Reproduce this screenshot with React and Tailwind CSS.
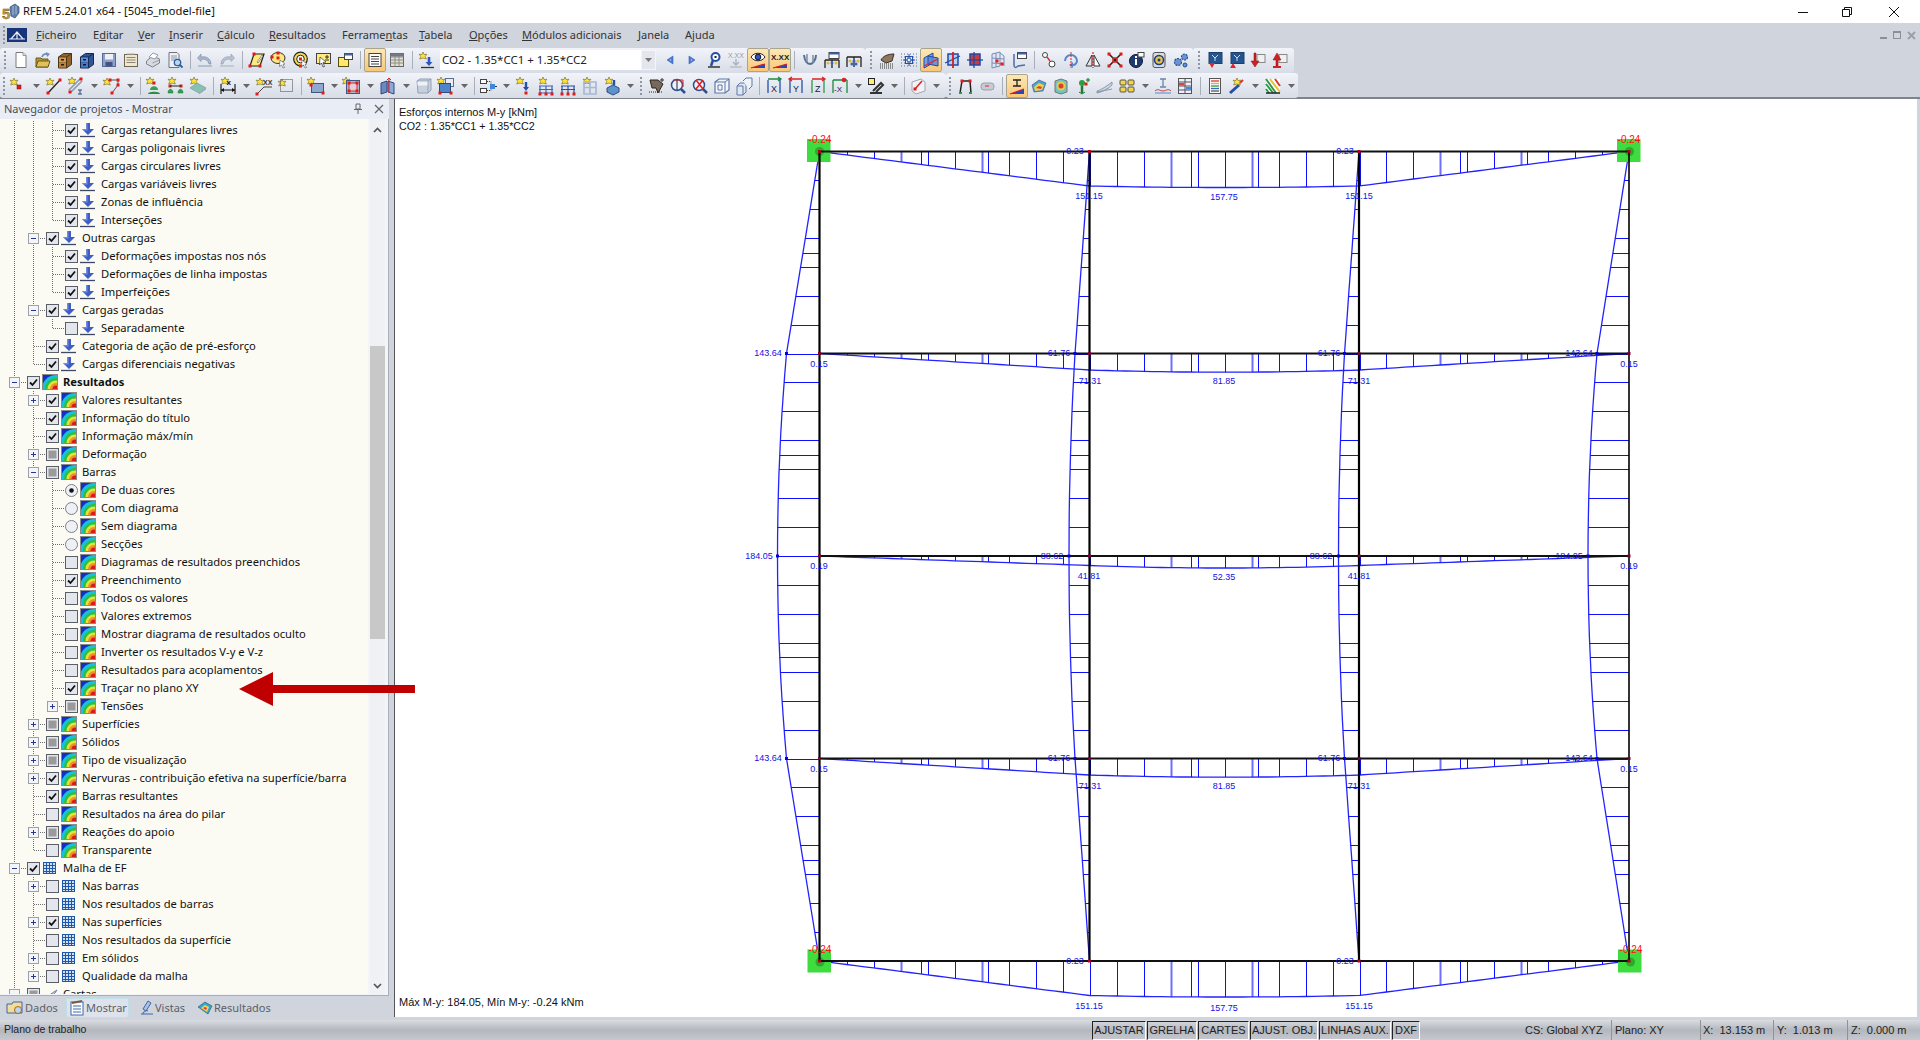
import React from 'react';

const star = (x, y) => <path d={`M${x} ${y - 4}l1.100 2.600 2.800-.4-1.700 2.200 1.100 2.600-3.300-1-3.300 1 1.100-2.600-1.700-2.200 2.800.4z`} fill="#ffe53b" stroke="#6d5f14" strokeWidth=".6" />;
const pt = (x, y, c = '#e21a1a') => <rect x={x - 1.5} y={y - 1.5} width="3" height="3" fill={c} />;
const IC = {
  new: <g><path d="M4 1.500h7l3 3v12H4z" fill="#fff" stroke="#7a7a7a" /><path d="M11 1.500v3h3" fill="#e6e6e6" stroke="#9a9a9a" /></g>,
  open: <g><path d="M2 7h5l1 1h6v8H2z" fill="#b8962e" stroke="#6d5818" /><path d="M4 10h12l-2 6H2z" fill="#dfc25a" stroke="#6d5818" /><path d="M8 6c1-3 4-4 6-2" stroke="#6b8fb8" strokeWidth="1.800" fill="none" /><path d="M12 1l4 2-3 3z" fill="#6b8fb8" /></g>,
  cabA: <g><path d="M2.500 6l5-3.500h8v11l-5 3.500h-8z" fill="#8f6430" stroke="#4c3414" /><path d="M2.500 6h8v11M10.500 6l5-3.500" fill="none" stroke="#4c3414" /><path d="M3 6.500h7v4.500H3z" fill="#cf9b55" /><path d="M3 11.500h7v5H3z" fill="#b98340" /><rect x="5" y="8" width="3" height="1.500" fill="#2b1c08" /><rect x="5" y="13" width="3" height="1.500" fill="#2b1c08" /></g>,
  cabB: <g><path d="M2.500 6l5-3.500h8v11l-5 3.500h-8z" fill="#2f5596" stroke="#16294f" /><path d="M2.500 6h8v11M10.500 6l5-3.500" fill="none" stroke="#16294f" /><path d="M3 6.500h7v4.500H3z" fill="#5f8fd6" /><path d="M3 11.500h7v5H3z" fill="#4a78c2" /><rect x="5" y="8" width="3" height="1.500" fill="#0b1838" /><rect x="5" y="13" width="3" height="1.500" fill="#0b1838" /></g>,
  save: <g><rect x="2.500" y="2.500" width="13" height="13" fill="#8fa0c8" stroke="#5a6a98" /><rect x="5" y="3" width="8" height="5.500" fill="#eef0f6" /><rect x="5.500" y="11" width="7" height="4.500" fill="#45547e" /></g>,
  note: <g><rect x="2.500" y="3.500" width="13" height="12" fill="#efe7cf" stroke="#6d6552" /><path d="M4.500 6.500h9M4.500 9h9M4.500 11.500h9" stroke="#8d8572" /><path d="M5 2.500h8v1H5z" fill="#bbb39a" /></g>,
  print: <g><path d="M2.500 10l6-5 7 3v4l-7 4-6-3z" fill="#d6d9e0" stroke="#7d818a" /><path d="M5 6l4-4 5 2-3 4z" fill="#fff" stroke="#9a9da5" /><path d="M8.500 12l7-3" stroke="#9a9da5" /></g>,
  prev: <g><path d="M3 1.500h8l2 2v13H3z" fill="#eef0f6" stroke="#6d7280" /><path d="M5 5h6M5 7h6M5 9h4" stroke="#8f94a3" /><circle cx="11.500" cy="11.500" r="3.200" fill="#bcd6f2" stroke="#2c5f9e" strokeWidth="1.300" /><path d="M13.500 13.500l3 3" stroke="#2c5f9e" strokeWidth="1.800" /></g>,
  undo: <g><path d="M5 3L1.500 7 5 10.500V8.500c4-1 7 .5 8 4.500h2c-.5-6-5-8-10-7z" fill="#a8b8d0" stroke="#77889f" strokeWidth=".6" /><path d="M2 15h14" stroke="#a8b5c8" strokeWidth="1.600" /></g>,
  redo: <g><path d="M13 3l3.500 4-3.500 3.500V8.500c-4-1-7 .5-8 4.500H3c.5-6 5-8 10-7z" fill="#b8c3d3" stroke="#8c9aae" strokeWidth=".6" /><path d="M2 15h14" stroke="#bac4d3" strokeWidth="1.600" /></g>,
  para: <g><path d="M6 3h10l-4 12H2z" fill="#ffe97e" stroke="#222" strokeWidth="1.200" /><path d="M9 11l5-7 1 1-5 7z" fill="#fff" stroke="#555" strokeWidth=".6" />{pt(6, 3)}{pt(2, 15)}{pt(12, 15)}</g>,
  lens: <g><ellipse cx="8" cy="7" rx="7" ry="5.500" fill="#ffe97e" stroke="#333" />{pt(2, 6)}{pt(8, 2)}{pt(8, 7)}<path d="M10 9l5 4-2 .5 1.500 3-1.500.5-1.500-3-2 1.500z" fill="#fff" stroke="#555" strokeWidth=".6" /></g>,
  ring: <g><circle cx="8.500" cy="8" r="6.800" fill="#f3d94e" stroke="#222" strokeWidth="1.200" /><circle cx="8.500" cy="8" r="3.800" fill="#fff" stroke="#222" />{pt(8.5, 8)}{pt(8.5, 15)}<path d="M10 9l5 4-2 .5 1.500 3-1.500.5-1.500-3-2 1.500z" fill="#fff" stroke="#555" strokeWidth=".6" /></g>,
  pm: <g><rect x="2.500" y="2.500" width="14" height="10" fill="#ffec7e" stroke="#444" /><path d="M6 6l6 5-3 .5 1.500 4-1.500.5-1.500-4-2 2z" fill="#fff" stroke="#333" strokeWidth=".7" /><path d="M11 6h4M13 4v4M11 9h4" stroke="#333" /></g>,
  win: <g><rect x="2.500" y="6.500" width="10" height="9" fill="#ffe86a" stroke="#554c14" /><rect x="8.500" y="2.500" width="8" height="6" fill="#fff" stroke="#444" /><path d="M8.500 3.500h8" stroke="#44649f" strokeWidth="2" /></g>,
  tab: <g><rect x="3" y="2.500" width="12" height="13" fill="#fff" stroke="#444" /><path d="M5 5.500h8M5 8h8M5 10.500h8M5 13h8" stroke="#444" /></g>,
  grid: <g><rect x="2.500" y="2.500" width="13" height="13" fill="#e3e1d5" stroke="#666" /><path d="M2.500 6h13M2.500 9h13M2.500 12h13M7 2.500v13M11 2.500v13" stroke="#8d8d86" /><path d="M2.500 4h13" stroke="#778" strokeWidth="3" /></g>,
  lc: <g>{star(5, 5)}<path d="M11 6v6" stroke="#2f55c0" strokeWidth="2.600" /><path d="M7.500 11l3.500 4 3.500-4z" fill="#2f55c0" /><path d="M3 16.500h13" stroke="#333" strokeWidth="1.300" /></g>,
  tl: <path d="M12 5v8L6 9zM10.500 7.500L8 9l2.500 1.500z" fillRule="evenodd" fill="#4a78d8" stroke="#3564be" strokeWidth=".6" />,
  tr: <path d="M6 5v8l6-4zM7.500 7.500L10 9l-2.500 1.500z" fillRule="evenodd" fill="#4a78d8" stroke="#3564be" strokeWidth=".6" />,
  per: <g><circle cx="10.500" cy="6" r="4" fill="#fff" stroke="#2650a8" strokeWidth="2" /><path d="M8 9l-2 6" stroke="#2650a8" strokeWidth="2.500" /><path d="M3 16h12" stroke="#333" strokeWidth="1.500" /><rect x="9.500" y="5" width="2" height="2" fill="#222" /></g>,
  xxg: <g><text x="1" y="7" fontSize="7" fill="#999" fontFamily="Liberation Sans">X.XX</text><path d="M9 8v6M6 11l3 3 3-3" stroke="#a9b3c4" fill="none" strokeWidth="1.400" /><path d="M3 16h12" stroke="#aaa" /></g>,
  eye: <g><path d="M2 6c3-5 11-5 14 0-3 5-11 5-14 0z" fill="#fff" stroke="#223" /><circle cx="9" cy="6" r="2.800" fill="#2f55c0" stroke="#112" /><path d="M2 17l14-4v4z" fill="#2148c6" /><path d="M2 17l14-4" stroke="#d81f1f" strokeWidth="1.300" /></g>,
  xx: <g><text x="0" y="9" fontSize="8" fontWeight="700" fill="#222" fontFamily="Liberation Sans">X.XX</text><path d="M2 17l14-4v4z" fill="#2148c6" /><path d="M2 17l14-4" stroke="#d81f1f" strokeWidth="1.300" /></g>,
  crv: <g><path d="M3 4c1 8 4 9 6 9s6-3 6-9" fill="none" stroke="#55708f" strokeWidth="2" /><path d="M6 3v8M12 4v8" stroke="#7a90aa" strokeWidth="1.500" /></g>,
  fr1: <g><rect x="6" y="1.500" width="10" height="6" fill="#fff" stroke="#444" /><path d="M6 2.500h10" stroke="#3a5fb0" strokeWidth="2" /><path d="M2 9h14" stroke="#222" strokeWidth="1.500" /><path d="M2 9v8M9 9v8M16 9v8" stroke="#222" strokeWidth="1.300" /><circle cx="5" cy="12" r="1.500" fill="#e0b93a" /><circle cx="9" cy="12" r="1.500" fill="#3a68c0" /><circle cx="13" cy="12" r="1.500" fill="#e0b93a" /></g>,
  fr2: <g><path d="M2 6h14" stroke="#222" strokeWidth="1.500" /><path d="M2 6v10M9 6v10M16 6v10" stroke="#222" strokeWidth="1.300" /><circle cx="5" cy="10" r="1.600" fill="#e0b93a" /><circle cx="9" cy="10" r="1.600" fill="#3a68c0" /><circle cx="13" cy="10" r="1.600" fill="#e0b93a" /><circle cx="7" cy="13" r="1.600" fill="#3a68c0" /><circle cx="11" cy="13" r="1.600" fill="#3a68c0" /></g>,
  hand: <g><path d="M3 9c2-4 7-6 13-6l-2 7-6 2z" fill="#8f775f" stroke="#3d3025" /><path d="M2 13h14M2 15h14M2 17h14" stroke="#333" strokeDasharray="1 1" /></g>,
  tgt: <g><path d="M1 3h16M1 6h16M1 9h16M1 12h16M1 15h16" stroke="#5c6f96" strokeDasharray="1 2" /><rect x="5.500" y="5.500" width="7" height="7" fill="none" stroke="#2650a8" /><path d="M3 9h12M9 3v12" stroke="#2650a8" /><circle cx="9" cy="9" r="2" fill="#dff" stroke="#2650a8" /></g>,
  pl1: <g><path d="M2 7l9-5v10l-9 5z" fill="#7aa0e0" stroke="#1e4aa8" /><path d="M6 5l10 2v8L6 13z" fill="#5a84d4" stroke="#1e4aa8" fillOpacity=".8" /><path d="M2 15l14-7" stroke="#e22" strokeWidth="1.200" /></g>,
  pl2: <g><path d="M4 3h10v11H4z" fill="#b9cdf0" stroke="#1e4aa8" strokeWidth="1.500" /><path d="M1 12L16 5" stroke="#1e4aa8" strokeWidth="1.300" /><path d="M9 1v16" stroke="#d61e1e" strokeWidth="1.800" /></g>,
  pl3: <g><path d="M4 3h10v11H4z" fill="#d23a3a" stroke="#1e4aa8" strokeWidth="1.500" /><path d="M1 9h16" stroke="#1e4aa8" strokeWidth="1.300" /><path d="M8 1v16" stroke="#1e4aa8" strokeWidth="1.300" /></g>,
  gr3: <g><path d="M4 3l8-2v14l-8 2z" fill="#dfe6f4" stroke="#7a8db3" /><path d="M4 7l12 1M4 12l12 1M8 2v14M12 2l4 3v10" stroke="#7a8db3" fill="none" />{pt(9, 10)}{pt(14, 13)}</g>,
  brk: <g><path d="M4 3v11c0 3 2 3 4 1l7-1" stroke="#4a6ea8" strokeWidth="1.500" fill="none" /><rect x="7.500" y="1.500" width="9" height="6" fill="#fff" stroke="#444" /><path d="M7.500 2.500h9" stroke="#3a5fb0" strokeWidth="2" /></g>,
  chn: <g><circle cx="5" cy="4" r="2.500" fill="#fff" stroke="#444" /><circle cx="12" cy="13" r="3" fill="#fff" stroke="#444" /><path d="M7 6l3 4" stroke="#d22" strokeWidth="1.300" /></g>,
  rot: <g><path d="M3 10a6 6 0 1 1 12 0c0 2-2 4-4 4" fill="none" stroke="#5b83c7" strokeWidth="2" /><path d="M7 14l4-3v6z" fill="#5b83c7" /><path d="M9 1v16" stroke="#d22" strokeDasharray="2 1" /></g>,
  mir: <g><path d="M8 4v11H2z" fill="#dfe2e8" stroke="#333" /><path d="M10 4v11h6z" fill="#fff" stroke="#333" /><path d="M9 1v16" stroke="#d22" strokeDasharray="2 1" strokeWidth="1.200" /></g>,
  xr: <g><path d="M3 3l12 12M15 3L3 15" stroke="#1e1e1e" strokeWidth="1.500" />{pt(3, 3)}{pt(15, 3)}{pt(3, 15)}{pt(15, 15)}<rect x="7" y="7" width="4" height="4" fill="none" stroke="#d22" strokeWidth="1.500" /></g>,
  inf: <g><circle cx="8" cy="10" r="6.500" fill="#1f3a6e" stroke="#0c1a38" /><rect x="7" y="8" width="2" height="6" fill="#fff" /><rect x="7" y="5" width="2" height="2" fill="#fff" /><rect x="10" y="1.500" width="6" height="4.500" fill="#fff" stroke="#444" /></g>,
  gp: <g><rect x="3" y="1.500" width="12" height="15" rx="2" fill="#d7dbe3" stroke="#555" /><circle cx="9" cy="9" r="4.500" fill="#e8c34c" stroke="#1e3c80" strokeWidth="1.500" /><circle cx="9" cy="9" r="1.500" fill="#1e3c80" /></g>,
  gr: <g><circle cx="6" cy="11" r="3.500" fill="#6a94cf" stroke="#234f93" strokeWidth="1.200" strokeDasharray="2 1" /><circle cx="12.500" cy="6" r="3" fill="#6a94cf" stroke="#234f93" strokeWidth="1.200" strokeDasharray="2 1" /><circle cx="13" cy="14" r="2" fill="#6a94cf" stroke="#234f93" /></g>,
  sh1: <g><rect x="3" y="1.500" width="13" height="11" fill="#25558f" stroke="#1c3f6e" /><path d="M6 4l3 3 3-3M9 7v3" stroke="#cfe0f5" fill="none" /><path d="M3 12l3 5 3-5z" fill="#e12626" /></g>,
  sh2: <g><rect x="3" y="1.500" width="13" height="11" fill="#25558f" stroke="#1c3f6e" /><path d="M6 4l3 3 3-3M9 7v3" stroke="#cfe0f5" fill="none" /><path d="M2 17l3-5 3 5z" fill="#e12626" /></g>,
  wr1: <g><rect x="7" y="3.500" width="8" height="8" fill="#f0f0f0" stroke="#888" /><path d="M6 2v8h3l-4 6-4-6h3V2z" fill="#d42020" stroke="#8e1212" strokeWidth=".5" /></g>,
  wr2: <g><rect x="7" y="3.500" width="8" height="8" fill="#f0f0f0" stroke="#888" /><path d="M5 2l4 7H6v6H4V9H1z" fill="#d42020" stroke="#8e1212" strokeWidth=".5" /><path d="M1 15h8v2H1z" fill="#d42020" /></g>,
  nd: <g>{star(5, 5)}<rect x="8" y="8" width="4" height="4" fill="#d61c1c" stroke="#7a1010" strokeWidth=".5" /></g>,
  ln: <g>{star(5, 5)}<path d="M3 16L15 3" stroke="#222" strokeWidth="1.300" />{pt(3, 16)}{pt(15, 3)}</g>,
  mb: <g>{star(5, 4)}<path d="M2 13L13 2M4 15L15 4" stroke="#8d9ab0" strokeWidth="1.700" />{pt(14, 2)}{pt(3, 15)}<path d="M11 13h4M11 17h4M13 13v4" stroke="#2f4a80" /></g>,
  pg: <g>{star(4, 5)}<path d="M7 3h8v5l-6 8" stroke="#555" fill="none" />{pt(7, 3)}{pt(15, 3)}{pt(15, 8)}{pt(9, 16)}</g>,
  sp1: <g>{star(5, 4)}{pt(9, 6)}<path d="M5 13c0-5 8-5 8 0z" fill="#31a34a" /><path d="M3 17c0-3 12-3 12 0z" fill="#2a8f40" /></g>,
  sp2: <g>{star(5, 4)}{pt(3, 9)}{pt(14, 9)}<path d="M3 9h11" stroke="#222" /><path d="M1 16c0-5 5-5 5 0zM11 16c0-5 5-5 5 0z" fill="#31a34a" stroke="#1a6c2d" strokeWidth=".5" /></g>,
  pt: <g>{star(5, 4)}<path d="M1 11l7-5 9 5-7 5z" fill="#86c2b0" stroke="#8aa" /><path d="M10 16l7-5v1.500l-7 5z" fill="#9ab" /></g>,
  dim: <g>{star(6, 4)}<path d="M2 7v10M16 7v10M2 13h14" stroke="#111" strokeWidth="1.100" /><text x="7.500" y="8" fontSize="8" fontWeight="700" fontFamily="Liberation Sans" fill="#111">x</text><path d="M2 13l3-2v4zM16 13l-3-2v4z" fill="#111" /></g>,
  txt: <g>{star(5, 5)}<path d="M2 17l7-7h8" stroke="#444" fill="none" />{pt(2, 17)}<text x="8" y="8" fontSize="7" fontWeight="700" fontFamily="Liberation Sans" fill="#333">XX</text></g>,
  ds: <g>{star(5, 6)}<rect x="3.500" y="2.500" width="12" height="12" fill="none" stroke="#444" strokeDasharray="1 1" /></g>,
  sf: <g>{star(4, 4)}<rect x="4.500" y="6.500" width="12" height="9" fill="#8ea8d0" stroke="#40567e" />{pt(16, 16)}{pt(4, 8)}</g>,
  sq: <g>{star(3, 4)}<rect x="3.500" y="3.500" width="13" height="13" fill="#aeb8cc" stroke="#40567e" /><rect x="6" y="6" width="8" height="8" fill="#e8cdd3" stroke="#c83040" />{pt(6, 6)}{pt(14, 6)}{pt(6, 14)}{pt(14, 14)}</g>,
  dl: <g><path d="M2 6l6-2v11l-6 2z" fill="#6b8ac0" stroke="#2d4a80" /><path d="M9 4l6 2v11l-6-2z" fill="#8fa9d4" stroke="#2d4a80" /><path d="M10 2v14" stroke="#d22" /><path d="M8 3l2-2 2 2" stroke="#d22" fill="none" /></g>,
  vol: <g><path d="M2 4l3-2h11v11l-3 3H3z" fill="#c8d0dc" stroke="#93a0b5" /><path d="M2 4h11v12M13 4l3-2" stroke="#93a0b5" fill="none" /><path d="M2.500 4.500h10v4h-10z" fill="#eef1f6" /></g>,
  sl: <g>{star(4, 4)}<rect x="8.500" y="1.500" width="8" height="8" fill="#e8edf5" stroke="#5a708f" /><rect x="2.500" y="6.500" width="11" height="9" fill="#4f85c8" stroke="#2f4a80" />{pt(3, 16)}{pt(14, 16)}</g>,
  dsh: <g><rect x="1.500" y="2.500" width="6" height="4" fill="#fff" stroke="#444" /><rect x="1.500" y="11.500" width="6" height="4" fill="#fff" stroke="#444" /><path d="M8 4.500h4v9H8" stroke="#444" strokeDasharray="1 1" fill="none" /><rect x="11" y="7" width="5" height="5" fill="#3f86dc" /><path d="M16 9.500h2" stroke="#333" /></g>,
  ly: <g>{star(5, 4)}<path d="M11 5v7" stroke="#2650a8" strokeWidth="2.400" /><path d="M8 10l3 4 3-4z" fill="#2650a8" />{pt(11, 16)}</g>,
  fr4: <g>{star(6, 4)}<path d="M2 9h14M3 9v8M9 9v8M15 9v8M2 16h14M2 12.500h14" stroke="#3f64b4" strokeWidth="1.200" />{pt(3, 17)}{pt(9, 17)}{pt(15, 17)}</g>,
  fr5: <g>{star(6, 4)}<path d="M2 9h14M3 9v8M9 9v8M15 9v8M2 12.500h14" stroke="#2650a8" strokeWidth="1.200" />{pt(3, 17)}{pt(9, 17)}{pt(15, 17)}</g>,
  fr6: <g>{star(6, 4)}<path d="M3 5h12v12H3zM3 10.500h12M9 5v12" stroke="#a9b8d4" strokeWidth="1.700" fill="none" /></g>,
  bolt: <g>{star(6, 4)}<path d="M11 3v5" stroke="#2650a8" strokeWidth="2.400" /><path d="M4 11l6-3 6 3v4l-6 3-6-3z" fill="#5f93c9" stroke="#2f4a80" /></g>,
  hm: <g><path d="M3 3h8l5 4 -5 9-2-5H5z" fill="#77695a" stroke="#2a241d" /><path d="M2 15h14" stroke="#222" strokeDasharray="1 1" /><path d="M13 3h4M15 1v4" stroke="#333" /></g>,
  zm: <g><circle cx="8" cy="8" r="5.500" fill="#eef3fb" stroke="#2f4f8f" strokeWidth="1.500" /><path d="M4 3h10v7" stroke="#d22" fill="none" /><path d="M8 3v10" stroke="#222" /><path d="M12 12l4 4" stroke="#2f4f8f" strokeWidth="2.500" /></g>,
  zx: <g><circle cx="8" cy="8" r="5.500" fill="#eef3fb" stroke="#2f4f8f" strokeWidth="1.500" /><path d="M5 3l7 9M12 3l-7 9" stroke="#d22" strokeWidth="1.500" /><path d="M12 12l4 4" stroke="#2f4f8f" strokeWidth="2.500" /></g>,
  cube: <g><path d="M2 5l4-3h10v11l-4 3H2z" fill="#f3f5fb" stroke="#5f78a8" strokeWidth="1.200" /><path d="M2 5h10v11M12 5l4-3M5 8h4v5H5z" stroke="#5f78a8" fill="none" /></g>,
  cub2: <g><path d="M2 9l3-3h6v9l-3 3H2z" fill="#dfe6f2" stroke="#5f78a8" /><path d="M8 4l3-3h6v8l-3 3" fill="#eef2f9" stroke="#5f78a8" /><path d="M2 9h6v9" stroke="#5f78a8" fill="none" /></g>,
  axx: <g><path d="M3 16V3M15 16V3" stroke="#2650a8" strokeWidth="1.300" /><path d="M3 2h12M13 0l3 2-3 2" stroke="#1c8c3c" fill="none" strokeWidth="1.300" /><text x="6" y="15" fontSize="9" fill="#223" fontFamily="Liberation Sans">X</text></g>,
  axy: <g><path d="M3 16V3M15 16V3" stroke="#2650a8" strokeWidth="1.300" /><path d="M3 2h12M5 0L2 2l3 2" stroke="#d22" fill="none" strokeWidth="1.300" /><text x="6" y="15" fontSize="9" fill="#223" fontFamily="Liberation Sans">Y</text></g>,
  axz: <g><path d="M3 16V3M15 16V3" stroke="#2a9a4a" strokeWidth="1.300" /><path d="M3 2h12M13 0l3 2-3 2" stroke="#d22" fill="none" strokeWidth="1.300" /><text x="6" y="15" fontSize="9" fill="#223" fontFamily="Liberation Sans">Z</text></g>,
  axn: <g><path d="M2 16V3M16 16V3M2 3h14" stroke="#1c8c3c" strokeWidth="1.300" /><circle cx="13" cy="3" r="2.300" fill="#d22" /><text x="3" y="15" fontSize="8" fill="#223" fontFamily="Liberation Sans">-X</text></g>,
  mic: <g><rect x="1.500" y="1.500" width="6" height="6" fill="#ffef70" stroke="#222" /><path d="M6 14l8-8 2 2-7 7M3 16h12" stroke="#333" strokeWidth="2" fill="none" /></g>,
  box: <g><path d="M3 5l9-3 4 3v9l-9 3-4-3z" fill="#f1f2f6" stroke="#a2a6ad" /><path d="M6 12l7-8" stroke="#d22" strokeWidth="1.500" />{pt(6, 12)}</g>,
  pi: <g><path d="M4 16L6 4h8l1 12" stroke="#222" strokeWidth="1.500" fill="none" />{pt(6, 4)}{pt(14, 4)}<path d="M3 16h3M13 16h3" stroke="#2a9a4a" strokeWidth="2" /></g>,
  tag: <g><rect x="3" y="6" width="13" height="7" rx="3" fill="#c6ccd6" stroke="#9aa0ad" /><rect x="7" y="8" width="4" height="2" fill="#d77" /></g>,
  act: <g><path d="M9 3v6M5 3h8M5 9h8" stroke="#222" strokeWidth="1.300" /><path d="M2 17l14-5v5z" fill="#2148c6" /><path d="M2 17l14-5" stroke="#d81f1f" strokeWidth="1.300" /></g>,
  sm: <g><path d="M2 8l7-5 7 3-3 8-9 1z" fill="#49a6c8" stroke="#337" strokeWidth=".5" /><path d="M4 10l5-4 5 2-2 5-7 1z" fill="#f0d04a" /><path d="M6 11l3-2 3 1-1 2z" fill="#e04030" /></g>,
  cb: <g><path d="M3 4l6-2 6 2v11l-6 2-6-2z" fill="#6ec6c4" stroke="#777" /><circle cx="9" cy="9" r="4.500" fill="#e6c94c" /><circle cx="9" cy="9" r="2.500" fill="#d94030" /></g>,
  gs: <g><circle cx="8" cy="6" r="3" fill="#2d9c47" /><path d="M8 9v7" stroke="#1c7a33" strokeWidth="2.500" /><path d="M5 15l3 2 3-2" stroke="#1c7a33" fill="none" /><path d="M12 3h4M14 1v4" stroke="#2d9c47" strokeWidth="1.500" />{pt(12, 7)}</g>,
  ps: <g><path d="M1 14c4-1 10-5 15-9v3c-4 4-10 7-15 8z" fill="#cfd5de" stroke="#89a" /><path d="M1 15l15-3" stroke="#89a" /></g>,
  qs: <g><rect x="2" y="3" width="6" height="5" rx="1" fill="#f2d54a" stroke="#554" /><rect x="10" y="3" width="6" height="5" rx="1" fill="#f2d54a" stroke="#554" /><rect x="2" y="10" width="6" height="5" rx="1" fill="#f2d54a" stroke="#554" /><rect x="10" y="10" width="6" height="5" rx="1" fill="#f2d54a" stroke="#554" /></g>,
  is: <g><path d="M6 2h6M6 10h6M9 2v8" stroke="#68a" strokeWidth="1.300" /><path d="M1 14c3-3 5 0 8 0s5-3 8 0" stroke="#c44" fill="none" /><path d="M1 16h16" stroke="#58c" /></g>,
  cl: <g><rect x="2.500" y="1.500" width="13" height="15" fill="#eef" stroke="#555" /><path d="M9 1.500v15M2.500 5h13M2.500 9h13M2.500 13h13" stroke="#555" /><rect x="3" y="6" width="5.500" height="2.500" fill="#d44" /><rect x="10" y="10" width="5" height="2.500" fill="#48d" /></g>,
  ct: <g><rect x="3.500" y="1.500" width="11" height="15" fill="#f8f8f8" stroke="#555" /><path d="M5 4h8" stroke="#d33" strokeWidth="1.300" /><path d="M5 6.500h8" stroke="#e8b030" strokeWidth="1.300" /><path d="M5 9h8" stroke="#2a9a4a" strokeWidth="1.300" /><path d="M5 11.500h8" stroke="#3a68c0" strokeWidth="1.300" /><path d="M5 14h8" stroke="#555" strokeWidth="1.300" /></g>,
  wand: <g><path d="M2 16L11 8" stroke="#2650a8" strokeWidth="3" /><path d="M12 6l3-3" stroke="#d33" strokeWidth="2" />{star(9, 5)}</g>,
  mix: <g><rect x="2" y="2" width="14" height="14" fill="#fff" /><path d="M2 2l10 14M2 7l7 9M2 12l3 4" stroke="#2a9a4a" strokeWidth="2" /><path d="M6 2l10 13" stroke="#e8c030" strokeWidth="2" /><path d="M11 2l5 7" stroke="#d33" strokeWidth="2" /><path d="M2 16h14" stroke="#222" strokeWidth="1.500" /></g>,
};

const Icon = ({ n }) => <svg width="18" height="18" viewBox="0 0 18 18" className="block overflow-visible">{IC[n]}</svg>;

const Grip = ({ w = 'w-[10px]' }) => (
  <div className={`${w} h-full flex flex-col items-center justify-center gap-[2px] shrink-0`}>
    {[0, 1, 2, 3, 4].map(i => <span key={i} className="w-[2px] h-[2px] bg-[#8f95a3]" />)}
  </div>
);
const Sep = ({ w = 'w-[8px]' }) => <div className={`${w} shrink-0 flex justify-center`}><span className="w-px h-[18px] bg-[#a9aeb9]" /></div>;
const Arr = () => <div className="w-[14px] shrink-0 flex justify-center"><svg width="7" height="4"><path d="M0 0h7L3.500 4z" fill="#666" /></svg></div>;
const Btn = ({ n, on }) => (
  <div className={`w-[22px] h-[24px] shrink-0 flex items-center justify-center ${on ? 'border border-[#a9a48d] rounded-[2px] bg-gradient-to-b from-[#fde9b5] to-[#f8c777]' : ''}`}>
    <Icon n={n} />
  </div>
);
const Items = ({ s }) => s.split(' ').map((t, i) => {
  if (t === '|') return <Sep key={i} />;
  if (t === '/') return <Sep key={i} w="w-[6px]" />;
  if (t === 'v') return <Arr key={i} />;
  if (t[0] === '*') return <Btn key={i} n={t.slice(1)} on />;
  return <Btn key={i} n={t} />;
});
const Band = ({ className = '', children }) => (
  <div className={`h-[25px] flex items-center rounded-[3px] bg-gradient-to-b from-[#f2f4fa] to-[#d8dce6] ${className}`}>{children}</div>
);

const MENU = [
  ['F', 'icheiro', '', 'w-[57px]'], ['E', 'ditar', 'd', 'w-[45px]'], ['V', 'er', '', 'w-[31px]'], ['I', 'nserir', '', 'w-[48px]'],
  ['C', 'álculo', '', 'w-[52px]'], ['R', 'esultados', '', 'w-[73px]'], ['Ferrame', 'ntas', 'n', 'w-[77px]'], ['T', 'abela', '', 'w-[50px]'],
  ['O', 'pções', '', 'w-[53px]'], ['M', 'ódulos adicionais', '', 'w-[116px]'], ['J', 'anela', '', 'w-[47px]'], ['A', 'juda', 'j', 'w-[50px]'],
];
const MenuItem = ({ m }) => {
  const [a, b, , w] = m;
  let content;
  if (m[0] === 'E') content = <>E<u>d</u>itar</>;
  else if (m[0] === 'Ferrame') content = <>Ferrame<u>n</u>tas</>;
  else if (m[0] === 'A') content = <>A<u>j</u>uda</>;
  else content = <><u>{a}</u>{b}</>;
  return <span className={`${w} shrink-0`}>{content}</span>;
};

const tree = [
  [2, '', 'c', 'L', 'Cargas retangulares livres'], [2, '', 'c', 'L', 'Cargas poligonais livres'], [2, '', 'c', 'L', 'Cargas circulares livres'],
  [2, '', 'c', 'L', 'Cargas variáveis livres'], [2, '', 'c', 'L', 'Zonas de influência'], [2, '', 'c', 'L', 'Interseções'],
  [1, '-', 'c', 'L', 'Outras cargas'], [2, '', 'c', 'L', 'Deformações impostas nos nós'], [2, '', 'c', 'L', 'Deformações de linha impostas'], [2, '', 'c', 'L', 'Imperfeições'],
  [1, '-', 'c', 'L', 'Cargas geradas'], [2, '', 'u', 'L', 'Separadamente'], [1, '', 'c', 'L', 'Categoria de ação de pré-esforço'], [1, '', 'c', 'L', 'Cargas diferenciais negativas'],
  [0, '-', 'c', 'R', 'Resultados', true], [1, '+', 'c', 'R', 'Valores resultantes'], [1, '', 'c', 'R', 'Informação do título'], [1, '', 'c', 'R', 'Informação máx/mín'],
  [1, '+', 'g', 'R', 'Deformação'], [1, '-', 'g', 'R', 'Barras'], [2, '', 'R', 'R', 'De duas cores'], [2, '', 'r', 'R', 'Com diagrama'], [2, '', 'r', 'R', 'Sem diagrama'], [2, '', 'r', 'R', 'Secções'],
  [2, '', 'u', 'R', 'Diagramas de resultados preenchidos'], [2, '', 'c', 'R', 'Preenchimento'], [2, '', 'u', 'R', 'Todos os valores'], [2, '', 'u', 'R', 'Valores extremos'],
  [2, '', 'u', 'R', 'Mostrar diagrama de resultados oculto'], [2, '', 'u', 'R', 'Inverter os resultados V-y e V-z'], [2, '', 'u', 'R', 'Resultados para acoplamentos'], [2, '', 'c', 'R', 'Traçar no plano XY'], [2, '+', 'g', 'R', 'Tensões'],
  [1, '+', 'g', 'R', 'Superfícies'], [1, '+', 'g', 'R', 'Sólidos'], [1, '+', 'g', 'R', 'Tipo de visualização'], [1, '+', 'c', 'R', 'Nervuras - contribuição efetiva na superfície/barra'],
  [1, '', 'c', 'R', 'Barras resultantes'], [1, '', 'u', 'R', 'Resultados na área do pilar'], [1, '+', 'g', 'R', 'Reações do apoio'], [1, '', 'u', 'R', 'Transparente'],
  [0, '-', 'c', 'M', 'Malha de EF'], [1, '+', 'u', 'M', 'Nas barras'], [1, '', 'u', 'M', 'Nos resultados de barras'], [1, '+', 'c', 'M', 'Nas superfícies'],
  [1, '', 'u', 'M', 'Nos resultados da superfície'], [1, '+', 'u', 'M', 'Em sólidos'], [1, '+', 'u', 'M', 'Qualidade da malha'],
  [0, '-', 'g', 'C', 'Cartas'],
];
const hasNext = (i, d) => {
  for (let j = i + 1; j < tree.length; j++) {
    if (tree[j][0] === d) return true;
    if (tree[j][0] < d) return false;
  }
  return d === 0;
};
const Guides = ({ i, l, exp }) => {
  const cx = d => 9.5 + 19 * d;
  const segs = [];
  for (let d = 0; d < l; d++) if (hasNext(i, d)) segs.push(`M${cx(d)} 0V18`);
  segs.push(`M${cx(l)} 0V${hasNext(i, l) ? 18 : 9.5}`);
  segs.push(`M${cx(l)} 9.500H${19 * (l + 1) + 3}`);
  return (
    <svg width={19 * (l + 1) + 3} height="18" className="block shrink-0" shapeRendering="crispEdges">
      <path d={segs.join('')} stroke="#6e6e6e" strokeDasharray="1 1" fill="none" />
      {exp && <g>
        <rect x={cx(l) - 5} y="4.500" width="10" height="10" fill="#f4f5f9" stroke="#9aa0ae" />
        <path d={`M${cx(l) - 2.5} 9.500h5`} stroke="#26388a" />
        {exp === '+' && <path d={`M${cx(l)} 7v5`} stroke="#26388a" />}
      </g>}
    </svg>
  );
};
const Check = ({ s }) => {
  if (s === 'r' || s === 'R') return (
    <svg width="13" height="13" className="block shrink-0"><circle cx="6.500" cy="6.500" r="6" fill="#eef0f5" stroke="#7b7f88" />{s === 'R' && <circle cx="6.500" cy="6.500" r="2.300" fill="#111" />}</svg>
  );
  return (
    <svg width="13" height="13" className="block shrink-0">
      <rect x=".5" y=".5" width="12" height="12" fill="#e4e6ee" stroke="#5b5e66" />
      {s === 'c' && <path d="M3 6.500l2.500 2.500L10 3.500" fill="none" stroke="#111" strokeWidth="1.800" />}
      {s === 'g' && <rect x="2.500" y="2.500" width="8" height="8" fill="#9a9a9a" />}
    </svg>
  );
};
const Rainbow = () => (
  <svg width="16" height="16" className="block shrink-0">
    <rect width="16" height="16" fill="#1230c4" />
    <circle cx="14" cy="15" r="14" fill="#18c0dc" /><circle cx="14" cy="15" r="11" fill="#2fbf3c" /><circle cx="14" cy="15" r="8.500" fill="#e4e23a" />
    <circle cx="14" cy="15" r="6" fill="#f0902a" /><circle cx="14" cy="15" r="3.500" fill="#d81c1c" />
    <rect x=".5" y=".5" width="15" height="15" fill="none" stroke="#8a8a8a" />
  </svg>
);
const Load = () => (
  <svg width="16" height="16" className="block shrink-0">
    <path d="M6 1h4v6h4l-6 6-6-6h4z" fill="#3e5dc6" /><path d="M6 1h1.500v7.500H3.500L2 7h4z" fill="#8aa0e4" opacity=".7" />
    <path d="M0 14.500h15" stroke="#3f4864" strokeWidth="1.300" />
  </svg>
);
const Mesh = () => (
  <svg width="16" height="16" className="block shrink-0" shapeRendering="crispEdges">
    <rect x="1.500" y="2.500" width="12" height="11" fill="#cfe2f8" stroke="#2057a8" />
    <path d="M1.500 5.500h12M1.500 8.500h12M1.500 11h12M4.500 2.500v11M7.500 2.500v11M10.500 2.500v11" stroke="#2057a8" />
  </svg>
);
const Chart = () => (
  <svg width="16" height="16" className="block shrink-0"><path d="M1 13c4-2 9-6 14-9-3 5-7 9-12 11z" fill="#b9c6dc" stroke="#6f82a8" /></svg>
);
const TREEIC = { L: Load, R: Rainbow, M: Mesh, C: Chart };

const TreeRow = ({ r, i }) => {
  const [l, exp, s, ic, text, bold] = r;
  const Ic = TREEIC[ic];
  return (
    <div className="flex items-center h-[18px] pl-[5px]">
      <Guides i={i} l={l} exp={exp} />
      <Check s={s} />
      <span className="ml-[2px]"><Ic /></span>
      <span className={`ml-[5px] whitespace-nowrap ${bold ? 'font-bold' : ''}`}>{text}</span>
    </div>
  );
};

/* ---------- structural diagram ---------- */
const X = [819.5, 1089.5, 1359, 1629];
const Y = [152.5, 354.5, 557, 759.5, 962];
const colOff = (t, a, b) => {
  if (t <= 1) return a * t;
  if (t <= 2) return a + (b - a) * (1 - (2 - t) * (2 - t));
  if (t <= 3) return a + (b - a) * (1 - (t - 2) * (t - 2));
  return a * (4 - t);
};
const colTicksY = [];
for (let s = 0; s < 4; s++) {
  for (let k = 1; k <= 7; k++) colTicksY.push(Y[s] + (k * (Y[s + 1] - Y[s])) / 7);
  colTicksY.push(Y[s] + (Y[s + 1] - Y[s]) / 2);
}
const COLS = [[X[0], 33, 42], [X[1], 14.5, 20.5], [X[2], 14.5, 20.5], [X[3], 32, 41]];
const BEAMS = [[Y[0], 34.5, 36], [Y[1], 16.5, 18.7], [Y[2], 9.5, 12], [Y[3], 16.5, 18.7], [Y[4], 34.5, 36]];
const beamOff = (x, a, b) => {
  if (x <= X[1]) return a * ((x - X[0]) / (X[1] - X[0]));
  if (x >= X[2]) return a * ((X[3] - x) / (X[3] - X[2]));
  const u = (x - X[1]) / (X[2] - X[1]);
  return a + (b - a) * 4 * u * (1 - u);
};
const beamTicks = [];
for (let s = 0; s < 3; s++) {
  for (let k = 1; k <= 10; k++) beamTicks.push(X[s] + 27 * k);
  beamTicks.push(X[s] + 101, X[s] + 168);
}
const LABELS = [
  ['-0.24', 820, 141, 'r'], ['-0.24', 1629, 141, 'r'], ['-0.24', 1631, 951, 'r'], ['-0.24', 820, 951, 'r'],
  ['0.23', 1075, 152], ['0.23', 1345, 152], ['0.23', 1075, 962], ['0.23', 1345, 962],
  ['151.15', 1089, 197], ['151.15', 1359, 197], ['157.75', 1224, 198], ['151.15', 1089, 1007], ['151.15', 1359, 1007], ['157.75', 1224, 1009],
  ['143.64', 768, 354], ['0.15', 819, 365], ['61.76', 1059, 354], ['71.31', 1090, 382], ['81.85', 1224, 382], ['61.76', 1329, 354], ['71.31', 1359, 382], ['143.64', 1579, 354], ['0.15', 1629, 365],
  ['184.05', 759, 557], ['0.19', 819, 567], ['88.62', 1052, 557], ['41.81', 1089, 577], ['52.35', 1224, 578], ['88.62', 1321, 557], ['41.81', 1359, 577], ['184.05', 1569, 557], ['0.19', 1629, 567],
  ['143.64', 768, 759], ['0.15', 819, 770], ['61.76', 1059, 759], ['71.31', 1090, 787], ['81.85', 1224, 787], ['61.76', 1329, 759], ['71.31', 1359, 787], ['143.64', 1579, 759], ['0.15', 1629, 770],
];
const Diagram = () => (
  <svg viewBox="395 100 1522 917" width="1522" height="917" className="absolute left-0 top-0">
    {BEAMS.map(([y, a, b], i) => {
      const pts = [];
      for (let x = X[0]; x <= X[3]; x += 9) pts.push(`${x},${(y + beamOff(x, a, b)).toFixed(1)}`);
      pts.push(`${X[3]},${y}`);
      return (
        <g key={i}>
          <polyline points={pts.join(' ')} fill="none" stroke="#2323ff" strokeWidth="1.300" />
          {beamTicks.map((x, k) => <path key={k} d={`M${Math.round(x) + .5} ${y}v${beamOff(x, a, b).toFixed(1)}`} stroke="#0f0fff" strokeWidth={k % 12 === 2 || k % 12 === 5 ? 2 : 1} strokeOpacity={k % 12 === 2 || k % 12 === 5 ? .6 : 1} />)}
        </g>
      );
    })}
    {COLS.map(([x, a, b], i) => {
      const pts = [];
      for (let t = 0; t <= 4.0001; t += 0.1) {
        const s = Math.min(3, Math.floor(t));
        pts.push(`${(x - colOff(t, a, b)).toFixed(1)},${(Y[s] + (t - s) * (Y[s + 1] - Y[s])).toFixed(1)}`);
      }
      return (
        <g key={i}>
          <polyline points={pts.join(' ')} fill="none" stroke="#2323ff" strokeWidth="1.300" />
          {colTicksY.map((y, k) => {
            const s = Math.min(3, Math.floor((y - Y[0]) / 202.5));
            const t = s + (y - Y[s]) / (Y[s + 1] - Y[s]);
            return <path key={k} d={`M${x} ${Math.round(y) + .5}h${-colOff(t, a, b).toFixed(1)}`} stroke="#0f0fff" />;
          })}
        </g>
      );
    })}
    {[[807, 140], [1617, 140], [807.5, 950.5], [1618, 950.5]].map(([x, y], i) => (
      <g key={i}><rect x={x} y={y} width="23.500" height="23" fill="#3edc3e" /><circle cx={x + 12.5} cy={y + 12.5} r="4.500" fill="#2aab2a" /></g>
    ))}
    {Y.map((y, i) => <path key={i} d={`M${X[0]} ${y}H${X[3]}`} stroke="#111" strokeWidth={i % 2 ? 2 : 2.200} />)}
    {X.map((x, i) => <path key={i} d={`M${x} ${Y[0]}V${Y[4]}`} stroke="#000" strokeWidth={i === 3 ? 1.600 : 2.200} />)}
    {X.map((x, i) => Y.map((y, j) => <rect key={`${i}${j}`} x={x - 1.5} y={y - 1.5} width="3" height="3" fill={j === 0 || j === 4 ? '#b0001c' : '#7a0030'} />))}
    {COLS.map(([x, a, b], i) => [1, 2, 3].map(t => <rect key={`${i}${t}`} x={x - colOff(t, a, b) - 1.5} y={Y[t] - 1.5} width="3" height="3" fill="#0000e0" />))}
    {LABELS.map(([s, x, y, c], i) => (
      <text key={i} x={x} y={y + 3} textAnchor="middle" fontSize={c ? 10 : 9} fill={c ? '#ff1010' : '#1010e8'} fontFamily="'Liberation Sans',sans-serif">{s}</text>
    ))}
  </svg>
);

const ST = ['AJUSTAR', 'GRELHA', 'CARTES', 'AJUST. OBJ.', 'LINHAS AUX.', 'DXF'];
const STW = ['w-[54px]', 'w-[50px]', 'w-[51px]', 'w-[68px]', 'w-[72px]', 'w-[28px]'];

export default function App() {
  return (
    <div className="relative w-[1920px] h-[1040px] overflow-hidden flex flex-col bg-[#cfd4dd] text-[#111] text-[11px] font-['Noto_Sans',sans-serif]">
      {/* title bar */}
      <div className="h-[23px] shrink-0 bg-white flex items-center pl-[2px]">
        <svg width="18" height="18" viewBox="0 0 18 18" className="block shrink-0">
          <path d="M8 4l5-3 4 3v6l-4 5-4-2z" fill="#5f7fa8" stroke="#334a6b" strokeWidth=".7" /><path d="M11 3v9M14 3v8" stroke="#a6bdd8" />
          <text x="0" y="16" fontSize="15" fontWeight="700" fill="#c9a23a" stroke="#5a4816" strokeWidth=".4" fontFamily="Liberation Sans">5</text>
        </svg>
        <span className="ml-[3px] text-[11.2px] text-[#111]">RFEM 5.24.01 x64 - [5045_model-file]</span>
        <div className="ml-auto flex items-center">
          <svg width="10" height="10" className="block mr-[34px]"><path d="M0 5.500h10" stroke="#111" /></svg>
          <svg width="10" height="10" className="block mr-[36px]"><path d="M.5 2.500h7v7h-7zM2.500 2.500v-2h7v7h-2" fill="none" stroke="#111" /></svg>
          <svg width="12" height="12" className="block mr-[20px]"><path d="M1 1l10 10M11 1L1 11" stroke="#111" /></svg>
        </div>
      </div>
      {/* menu */}
      <div className="h-[24px] shrink-0 flex items-center text-[#333]">
        <Grip w="w-[7px]" />
        <svg width="20" height="14" className="block shrink-0"><rect width="20" height="14" fill="#16357a" /><path d="M2 11h16M4 11l6-7 6 7M10 4v7" stroke="#e9eef8" strokeWidth="1.200" fill="none" /></svg>
        <span className="w-[9px] shrink-0" />
        {MENU.map((m, i) => <MenuItem key={i} m={m} />)}
        <div className="ml-auto flex items-center gap-[6px] pr-[4px]">
          <span className="w-[7px] h-[2px] bg-[#8b8f98] mt-[6px]" />
          <span className="w-[8px] h-[8px] border border-[#8b8f98] border-t-2" />
          <svg width="9" height="9" className="block"><path d="M1 1l7 7M8 1L1 8" stroke="#9a9ea7" strokeWidth="1.800" /></svg>
        </div>
      </div>
      {/* toolbars */}
      <div className="h-[26px] shrink-0 flex items-center">
        <Band className="w-[865px]">
          <Grip />
          <Items s="new open cabA cabB save note print prev | undo redo | para lens ring pm win | *tab grid | lc" />
          <div className="ml-[2px] w-[216px] h-[20px] shrink-0 bg-white flex items-center pl-[2px] text-[#222]">
            <span className="text-[11.5px]">CO2 - 1.35*CC1 + 1.35*CC2</span>
            <span className="ml-auto w-[15px] h-full bg-[#e3e6ec] border border-[#f4f5f8] flex items-center justify-center"><svg width="7" height="4" className="block"><path d="M0 0h7L3.500 4z" fill="#777" /></svg></span>
          </div>
          <div className="w-[2.5px] shrink-0" />
          <Items s="tl tr per xxg *eye *xx | crv fr1 fr2" />
        </Band>
        <Band className="w-[328px]">
          <Grip w="w-[11px]" />
          <Items s="hand tgt *pl1 pl2 pl3 gr3 brk | chn rot mir xr inf gp gr" />
        </Band>
        <Band className="w-[101px]">
          <Grip w="w-[11px]" />
          <Items s="sh1 sh2 wr1 wr2" />
        </Band>
      </div>
      <div className="h-[26px] shrink-0 flex items-start border-b-2 border-[#80848c]">
        <Band className="w-[946px]">
          <Grip w="w-[7px]" />
          <Items s="nd v ln mb v pg v / sp1 sp2 pt | dim v txt ds | sf v sq v dl v vol sl v / dsh v ly fr4 fr5 fr6 bolt v" />
          <Grip w="w-[8px]" />
          <Items s="hm zm zx cube cub2 | axx axy axz axn v mic v / box v" />
        </Band>
        <Band className="w-[352px]">
          <Grip w="w-[8px]" />
          <Items s="pi tag | *act sm cb gs ps qs v is cl | ct wand v mix v" />
        </Band>
      </div>
      {/* body */}
      <div className="flex-1 min-h-0 flex">
        <div className="w-[389px] shrink-0 flex flex-col">
          <div className="h-[20px] shrink-0 bg-[#e9edf6] flex items-center pl-[4px] text-[11px] text-[#4a4d55]">
            <span>Navegador de projetos - Mostrar</span>
            <svg width="10" height="12" className="block ml-auto mr-[11px]"><path d="M3 1h4v5H3zM1 6.500h8M5 6.500V11" fill="none" stroke="#666" /></svg>
            <svg width="10" height="10" className="block mr-[5px]"><path d="M1 1l8 8M9 1L1 9" stroke="#666" strokeWidth="1.200" /></svg>
          </div>
          <div className="flex-1 min-h-0 flex bg-[#f3f5f9] border-r border-[#a9adb5] border-b">
            <div className="w-[368px] shrink-0 bg-[#fbfbf3] overflow-hidden pt-[2px] h-[875px] text-[11.2px] text-[#111]">
              {tree.map((r, i) => <TreeRow key={i} r={r} i={i} />)}
            </div>
            <div className="w-[15px] ml-[2px] shrink-0 flex flex-col items-center bg-[#f0f1f5]">
              <svg width="9" height="7" className="block mt-[8px]"><path d="M1 5l3.500-3.500L8 5" fill="none" stroke="#555" strokeWidth="1.700" /></svg>
              <div className="w-full h-[212px] shrink-0" />
              <div className="w-full h-[293px] shrink-0 bg-[#c8c8c8]" />
              <svg width="9" height="7" className="block mt-auto mb-[6px]"><path d="M1 2l3.500 3.500L8 2" fill="none" stroke="#555" strokeWidth="1.700" /></svg>
            </div>
          </div>
          <div className="h-[24px] shrink-0 flex items-center text-[11px] text-[#5c6068]">
            <div className="w-[66px] pl-[6px] flex items-center">
              <svg width="18" height="16" className="block shrink-0"><path d="M1 4h5l1-2h9v11H1z" fill="#f2dc96" stroke="#3f66a8" /><circle cx="12" cy="10" r="3.500" fill="#bcd6f2" stroke="#a4661f" /></svg>
              <span className="ml-[1px]">Dados</span>
            </div>
            <div className="w-[63px] h-[20px] bg-[#dde2ec] border border-[#bfe0e6] rounded-b-[3px] flex items-center pl-[2px]">
              <svg width="16" height="16" className="block shrink-0"><rect x="2" y="2" width="12" height="13" fill="#fff" stroke="#3f66a8" /><path d="M4 6h8M4 9h8M4 12h8" stroke="#3f66a8" /><path d="M3 3l10-2" stroke="#7a5c3a" strokeWidth="2" /></svg>
              <span className="ml-[1px]">Mostrar</span>
            </div>
            <div className="w-[68px] pl-[10px] flex items-center">
              <svg width="16" height="16" className="block shrink-0"><path d="M9 1l3 2-5 8-3-2zM2 14h12M4 14c0-3 3-4 5-3" fill="#aac0e8" stroke="#3f66a8" /></svg>
              <span>Vistas</span>
            </div>
            <div className="flex items-center">
              <svg width="16" height="14" className="block shrink-0"><path d="M1 6l7-5 7 4-4 8z" fill="#31a7d8" stroke="#334" strokeWidth=".5" /><path d="M4 7l4-3 4 2-2 5z" fill="#f1d74a" /><path d="M6 7l2-1 2 1-1 2z" fill="#e04030" /></svg>
              <span className="ml-[1px]">Resultados</span>
            </div>
          </div>
        </div>
        <div className="w-[5px] shrink-0" />
        <div className="relative w-[1523px] h-[918px] shrink-0 bg-white border-l border-[#555] flex flex-col pl-[4px] pt-[6px] pb-[8px] text-[11px] font-['Liberation_Sans',sans-serif] text-[#111]">
          <Diagram />
          <div className="relative leading-[14px]">Esforços internos M-y [kNm]</div>
          <div className="relative leading-[14px] text-[10.7px]">CO2 : 1.35*CC1 + 1.35*CC2</div>
          <div className="relative mt-auto leading-[14px]">Máx M-y: 184.05, Mín M-y: -0.24 kNm</div>
        </div>
      </div>
      {/* status */}
      <div className="h-[20px] shrink-0 flex items-center text-[#222] text-[11px] bg-gradient-to-b from-[#d9dce1] via-[#b4b7bd] to-[#c5c8ce] font-['Liberation_Sans',sans-serif]">
        <span className="w-[1092px] shrink-0 pl-[4px] text-[10.5px]">Plano de trabalho</span>
        {ST.map((t, i) => (
          <span key={t} className={`${STW[i]} shrink-0 h-[19px] mr-[1px] flex items-center justify-center border-t border-l border-[#222] border-r border-r-white border-b border-b-white whitespace-nowrap`}>{t}</span>
        ))}
        <span className="w-[103px] shrink-0 ml-[1px] h-[19px]" />
        <span className="w-[87px] shrink-0 h-full flex items-center border-r border-[#8f9299]">CS: Global XYZ</span>
        <span className="w-[89px] shrink-0 h-full flex items-center border-r border-[#8f9299] pl-[3px]">Plano: XY</span>
        <span className="w-[73px] shrink-0 h-full flex items-center border-r border-[#8f9299] pl-[2px] gap-[6px]">X: <span>13.153 m</span></span>
        <span className="w-[74px] shrink-0 h-full flex items-center border-r border-[#8f9299] pl-[3px] gap-[6px]">Y: <span>1.013 m</span></span>
        <span className="shrink-0 h-full flex items-center pl-[3px] gap-[6px]">Z: <span>0.000 m</span></span>
      </div>
      {/* red arrow */}
      <svg width="178" height="36" className="absolute left-[238px] top-[671px]">
        <path d="M1 18L35 1v13h142v8H35v13z" fill="#c00000" />
      </svg>
    </div>
  );
}
